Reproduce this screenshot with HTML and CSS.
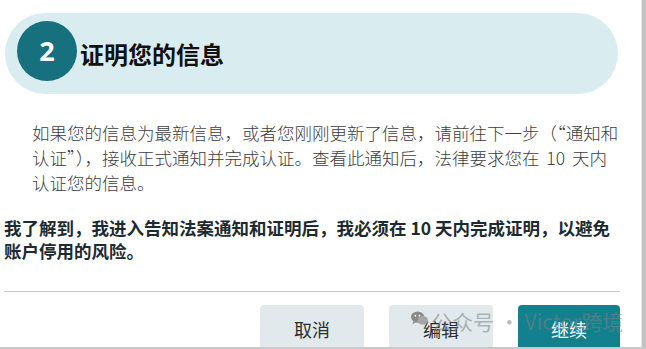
FILE: index.html
```html
<!DOCTYPE html>
<html lang="zh-CN">
<head>
<meta charset="utf-8">
<title>证明您的信息</title>
<link rel="stylesheet" href="styles.css">
</head>
<body>
<div class="shot">
  <main class="dialog">
    <header class="step">
      <span class="step-num">2</span>
      <h1 class="step-title">证明您的信息</h1>
    </header>
    <p class="info">如果您的信息为最新信息，或者您刚刚更新了信息，请前往下一步（“通知和认证”），接收正式通知并完成认证。查看此通知后，法律要求您在 10 天内认证您的信息。</p>
    <p class="ack">我了解到，我进入告知法案通知和证明后，我必须在 10 天内完成证明，以避免账户停用的风险。</p>
    <hr class="divider">
    <div class="actions">
      <button class="btn">取消</button>
      <button class="btn">编辑</button>
      <button class="btn primary">继续</button>
    </div>
  </main>
  <div class="edge"></div>
  <div class="watermark">
    <svg class="wm-icon" width="17" height="15" viewBox="0 0 18 16" aria-hidden="true">
      <ellipse cx="7" cy="6.5" rx="7" ry="6" fill="#8a8a8a"/>
      <path d="M2.5 11 L1.5 14 L5 12 Z" fill="#8a8a8a"/>
      <ellipse cx="12.5" cy="10" rx="5.5" ry="4.6" fill="#a6a6a6"/>
      <circle cx="4.6" cy="5" r="0.9" fill="#fff"/>
      <circle cx="9" cy="5" r="0.9" fill="#fff"/>
    </svg>
    <span class="wm-text">公众号 · Victor跨境</span>
  </div>
</div>
</body>
</html>
```
FILE: styles.css
```css
html, body {
  margin: 0;
  padding: 0;
  background: #ffffff;
}

.shot {
  position: relative;
  display: flex;
  width: 646px;
  height: 349px;
  box-sizing: border-box;
  border-bottom: 2px solid #c9c9c9;
  overflow: hidden;
  font-family: "Noto Sans CJK SC", "Noto Sans", sans-serif;
}

.dialog {
  width: 641px;
  flex: none;
  box-sizing: border-box;
  padding: 13px 21px 0 4px;
  overflow: hidden;
}

.step {
  display: flex;
  align-items: center;
  height: 81px;
  margin: 0 2px 0 1px;
  border-radius: 41px;
  background: #d9ecef;
}

.step-num {
  align-self: flex-start;
  flex: none;
  width: 60px;
  height: 60px;
  margin: 8px 0 0 12px;
  border-radius: 50%;
  background: #17707e;
  color: #ffffff;
  font-family: "Noto Sans", sans-serif;
  font-weight: 700;
  font-size: 27px;
  line-height: 60px;
  text-align: center;
}

.step-title {
  margin: 0 0 0 3px;
  font-size: 24px;
  font-weight: 700;
  color: #111111;
  line-height: 30px;
}

.info {
  margin: 26px 0 0 28px;
  font-size: 17.5px;
  font-weight: 300;
  line-height: 25px;
  word-spacing: 3px;
  color: #3d3d3d;
}

.ack {
  margin: 21px 0 0 0;
  font-size: 17.5px;
  font-weight: 700;
  line-height: 23px;
  color: #1d2b30;
}

.divider {
  margin: 29px 0 0 0;
  border: 0;
  border-top: 1px solid #c6c6c6;
  height: 0;
}

.actions {
  display: flex;
  justify-content: flex-end;
  gap: 25px;
  margin-top: 13px;
}

.btn {
  width: 104px;
  height: 48px;
  padding: 0;
  border: 0;
  border-radius: 4px 4px 0 0;
  background: #e1e9ec;
  color: #2e2e2e;
  font-family: "Noto Sans CJK SC", sans-serif;
  font-size: 18px;
  line-height: 48px;
}

.btn.primary {
  width: 102px;
  background: #13808e;
  color: #ffffff;
}

.edge {
  flex: none;
  width: 5px;
  background: linear-gradient(to right, #e6e6e6 0, #e6e6e6 1px, #c2c2c2 1px);
}

.watermark {
  position: absolute;
  left: 411px;
  top: 307px;
  display: flex;
  align-items: center;
  gap: 3px;
  pointer-events: none;
}

.wm-icon {
  margin-top: -6px;
}

.wm-text {
  font-family: "Noto Sans CJK SC", sans-serif;
  font-size: 21px;
  line-height: 28px;
  color: rgba(120, 130, 134, 0.55);
  white-space: nowrap;
}
```
